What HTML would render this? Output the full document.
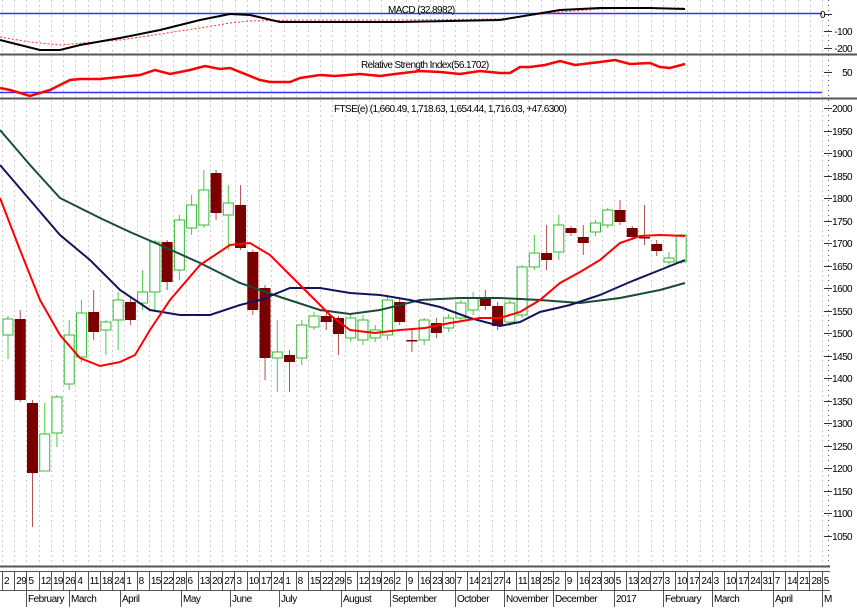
<!DOCTYPE html>
<html><head><meta charset="utf-8"><style>
body{margin:0;background:#fff;width:857px;height:607px;overflow:hidden;position:relative;font-family:"Liberation Sans",sans-serif;}
svg{position:absolute;left:0;top:0}
.t{font-size:10px;letter-spacing:-0.6px;fill:#000}
.row{position:absolute;left:2px;display:flex;font-size:10px;letter-spacing:-0.6px;}
.row span{width:12.24px;flex:none;box-sizing:border-box;border-left:1px solid #555;padding-left:1px;height:19px;line-height:19px;white-space:nowrap;overflow:visible}
.mrow{position:absolute;left:0;top:590px;height:17px;width:830px;font-size:10px;letter-spacing:-0.5px;}
.mrow span{position:absolute;top:0;height:17px;line-height:20px;border-left:1px solid #555;padding-left:1px}
</style></head><body>
<svg id="s" width="857" height="607" viewBox="0 0 857 607">
<g id="grid"></g>
<line x1="0" y1="13.5" x2="822" y2="13.5" stroke="#3333ff" stroke-width="1.5"/>
<line x1="0" y1="92.5" x2="822" y2="92.5" stroke="#3333ff" stroke-width="1.5"/>
<line x1="0" y1="54.5" x2="857" y2="54.5" stroke="#555" stroke-width="2"/>
<line x1="0" y1="98.5" x2="857" y2="98.5" stroke="#555" stroke-width="2"/>
<line x1="0" y1="566.5" x2="830" y2="566.5" stroke="#555" stroke-width="2"/>
<line x1="0" y1="571.5" x2="830" y2="571.5" stroke="#555" stroke-width="1"/>
<line x1="0" y1="590.5" x2="830" y2="590.5" stroke="#555" stroke-width="1"/>
<polyline fill="none" stroke="#ff3333" stroke-width="1" stroke-dasharray="2,2" points="0,37 30,42 60,45 120,40 160,34 200,28 230,23 250,21 300,20 400,20 500,19 560,12 600,9 650,8 685,8"/>
<polyline fill="none" stroke="#000" stroke-width="2" points="0,40 20,45 40,50 60,50 80,45 120,38 160,30 200,20 230,14 250,15 280,22 330,22 400,22 500,20 560,10 600,8 650,8 685,9"/>
<polyline fill="none" stroke="#ff0000" stroke-width="2.5" points="0,88 10,90 30,96 50,90 70,80 80,79 100,79 120,77 140,75 155,70 170,74 190,70 205,66 220,69 230,68 260,80 270,82 290,82 300,78 320,75 335,76 360,74 380,76 395,74 420,71 440,72 460,74 480,71 500,73 510,73 520,67 530,67 545,65 560,61 575,65 600,62 615,60 630,64 650,63 660,67 670,68 685,64"/>
<g id="candles"></g>
<polyline fill="none" stroke="#1a4a3a" stroke-width="2" points="0,130 30,165 60,198 100,218 130,232 160,245 200,263 240,283 280,297 320,310 350,314 380,310 420,300 460,298 500,298 540,300 580,303 620,298 660,290 685,283"/>
<polyline fill="none" stroke="#14145e" stroke-width="2" points="0,165 30,200 60,235 90,260 120,290 150,310 180,315 210,315 240,305 260,300 290,288 320,288 350,293 380,295 410,300 440,307 470,318 500,326 520,322 540,312 570,305 600,295 630,282 660,270 685,260"/>
<polyline fill="none" stroke="#ff0000" stroke-width="2" points="0,198 20,250 40,300 60,335 80,358 100,366 120,362 135,355 150,330 170,300 200,265 230,245 250,243 270,255 300,285 330,315 350,330 375,333 400,330 425,328 450,323 480,318 500,318 520,312 540,300 560,283 580,272 600,260 620,243 640,236 660,235 685,236"/>
<g id="ticks"></g>
<text class="t" x="388" y="13">MACD (32.8982)</text>
<text class="t" x="361" y="68">Relative Strength Index(56.1702)</text>
<text class="t" x="334" y="112">FTSE(e) (1,660.49, 1,718.63, 1,654.44, 1,716.03, +47.6300)</text>
<g class="t" text-anchor="end">
<text x="825" y="18">0</text><text x="852" y="35">-100</text><text x="852" y="52">-200</text><text x="852" y="76">50</text>
<text x="852" y="112">2000</text><text x="852" y="135">1950</text><text x="852" y="157">1900</text><text x="852" y="180">1850</text><text x="852" y="202">1800</text><text x="852" y="225">1750</text><text x="852" y="247">1700</text><text x="852" y="270">1650</text><text x="852" y="292">1600</text><text x="852" y="315">1550</text><text x="852" y="337">1500</text><text x="852" y="360">1450</text><text x="852" y="382">1400</text><text x="852" y="405">1350</text><text x="852" y="427">1300</text><text x="852" y="450">1250</text><text x="852" y="472">1200</text><text x="852" y="495">1150</text><text x="852" y="517">1100</text><text x="852" y="540">1050</text>
</g>
</svg>
<div class="row" style="top:572px">
<span>2</span><span>29</span><span>5</span><span>12</span><span>19</span><span>26</span><span>4</span><span>11</span><span>18</span><span>24</span><span>1</span><span>8</span><span>15</span><span>22</span><span>28</span><span>6</span><span>13</span><span>20</span><span>27</span><span>3</span><span>10</span><span>17</span><span>24</span><span>1</span><span>8</span><span>15</span><span>22</span><span>29</span><span>5</span><span>12</span><span>19</span><span>26</span><span>2</span><span>9</span><span>16</span><span>23</span><span>30</span><span>7</span><span>14</span><span>21</span><span>27</span><span>4</span><span>11</span><span>18</span><span>25</span><span>2</span><span>9</span><span>16</span><span>23</span><span>30</span><span>5</span><span>13</span><span>20</span><span>27</span><span>3</span><span>10</span><span>17</span><span>24</span><span>3</span><span>10</span><span>17</span><span>24</span><span>31</span><span>7</span><span>14</span><span>21</span><span>28</span><span>5</span>
</div>
<div class="mrow">
<span style="left:26px">February</span><span style="left:75px;left:69px">March</span><span style="left:120px">April</span><span style="left:181px">May</span><span style="left:230px">June</span><span style="left:279px">July</span><span style="left:341px">August</span><span style="left:390px">September</span><span style="left:455px">October</span><span style="left:504px">November</span><span style="left:553px">December</span><span style="left:614px">2017</span><span style="left:663px">February</span><span style="left:712px">March</span><span style="left:773px">April</span><span style="left:822px">M</span>
</div>
<script>
var NS="http://www.w3.org/2000/svg";
function el(p,n,a){var e=document.createElementNS(NS,n);for(var k in a)e.setAttribute(k,a[k]);p.appendChild(e);return e;}
var g=document.getElementById('grid');
for(var i=0;i<68;i++){var x=Math.round(2+12.24*i)+0.5;el(g,'line',{x1:x,y1:0,x2:x,y2:566,stroke:'#ccc','stroke-dasharray':'2,3'});}
var tk=document.getElementById('ticks');
el(tk,'line',{x1:828.5,y1:0,x2:828.5,y2:566,stroke:'#555','stroke-dasharray':'1,4'});
for(var v=1050;v<=2000;v+=50){var y=Math.round(108+(2000-v)*0.4505)+0.5;el(tk,'line',{x1:824,y1:y,x2:832,y2:y,stroke:'#333'});}
[14,31,48,72].forEach(function(y){el(tk,'line',{x1:824,y1:y+.5,x2:832,y2:y+.5,stroke:'#333'});});
// [open_y, close_y, high_y, low_y] ; green if close_y<open_y
var d=[[335,319,316,359],[319,400,310,402],[403,473,400,527],[471,434,403,447],[433,397,395,447],[384,335,320,390],[357,313,300,362],[312,332,290,340],[330,322,320,355],[320,300,292,350],[302,320,298,325],[303,292,270,310],[292,242,240,310],[242,282,240,290],[270,220,215,280],[228,205,195,235],[225,190,170,228],[173,213,170,220],[215,203,185,250],[205,248,185,250],[252,310,250,315],[288,358,285,380],[358,352,320,392],[355,362,350,392],[358,325,320,365],[327,316,312,330],[316,322,312,330],[318,334,316,355],[338,318,315,342],[340,320,315,345],[338,330,325,342],[335,300,295,340],[302,322,298,325],[340,341,330,352],[340,320,318,345],[323,333,318,338],[328,318,314,332],[318,303,300,322],[310,298,292,315],[298,306,290,310],[306,326,302,330],[322,303,300,326],[315,267,265,318],[267,253,235,270],[253,260,225,270],[252,225,215,260],[228,233,226,236],[237,243,225,255],[232,223,220,236],[225,210,208,228],[210,222,200,225],[228,237,226,240],[237,238,205,245],[244,251,240,256],[262,258,252,266],[262,235,234,264]];
var c=document.getElementById('candles');
d.forEach(function(q,i){var x=8+12.24*i,o=q[0],cl=q[1],up=cl<o;var col=up?'#22bb22':'#7a0000';var wc=up?'#44cc44':'#b05050';
var t=Math.min(o,cl),b=Math.max(o,cl);
el(c,'line',{x1:x,y1:q[2],x2:x,y2:t,stroke:wc});el(c,'line',{x1:x,y1:b,x2:x,y2:q[3],stroke:wc});
if(up)el(c,'rect',{x:x-5,y:t,width:10,height:Math.max(b-t,1),fill:'#fff',stroke:'#33bb33'});
else el(c,'rect',{x:x-5.5,y:t,width:11,height:Math.max(b-t,1.5),fill:'#7a0000'});});
</script>
</body></html>
